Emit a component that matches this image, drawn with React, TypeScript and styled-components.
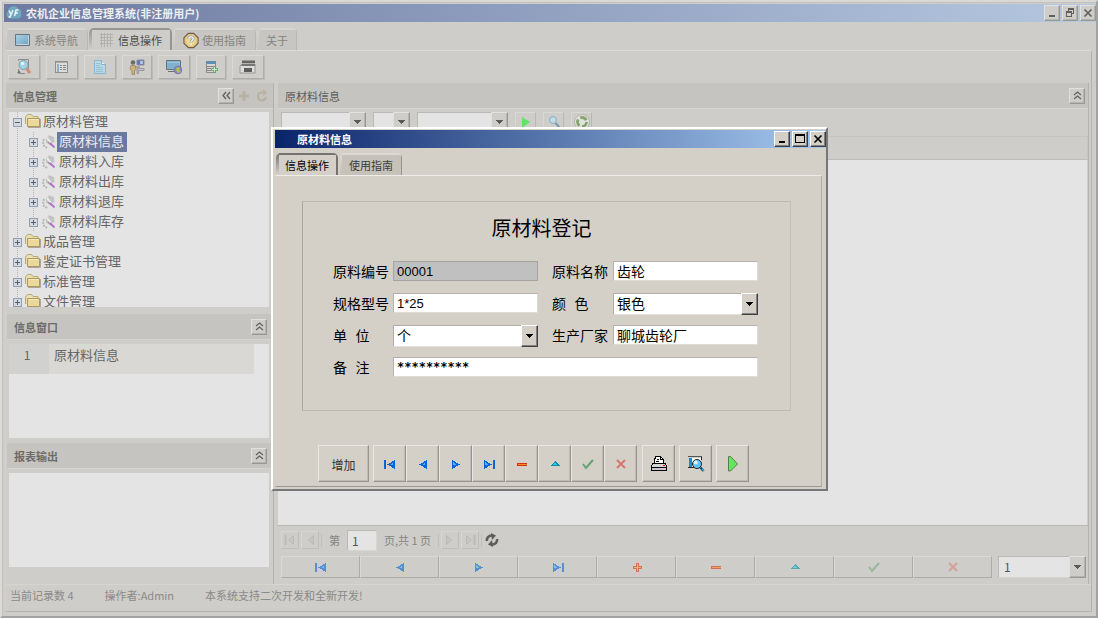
import React from 'react';
import styled, { createGlobalStyle, css } from 'styled-components';

const UI_FONT = '"Noto Sans CJK SC", "Noto Sans", sans-serif';

const GlobalStyle = createGlobalStyle`
  *, *::before, *::after { box-sizing: border-box; }
  body { margin: 0; background: #cecdc9; font-family: ${UI_FONT}; font-size: 11px; line-height: 16px; color: #666; }
  button, input, select { font: inherit; color: inherit; margin: 0; border-radius: 0; }
  button { cursor: pointer; }
  h1, h2, h3, ul, p { margin: 0; padding: 0; font-size: inherit; font-weight: normal; }
  ul { list-style: none; }
  svg { display: block; flex: none; }
`;

/* ---------- window frame ---------- */

const AppWindow = styled.div`
  display: flex;
  flex-direction: column;
  height: 100vh;
  min-height: 600px;
  padding: 2px 0 4px 2px;
  border: 2px solid;
  border-color: #d9d8d5 #a2a2a2 #a2a2a2 #dcdbd8;
  box-shadow: inset 1px 1px 0 #c2c1bd;
  background: #cecdc9;
`;

const TitleBar = styled.header`
  display: flex;
  align-items: center;
  gap: 4px;
  height: 18px;
  padding-left: 2px;
  background: linear-gradient(90deg, #6e7aa1, #b5c8e0);
  color: #eceef2;
`;

const WindowTitle = styled.h1`
  flex: 1;
  font-weight: bold;
  line-height: 18px;
  white-space: nowrap;
`;

const WindowControls = styled.div`
  display: flex;
  gap: 2px;
`;

const bevel = css<{ $strong?: boolean }>`
  border: 1px solid;
  border-color: ${p => (p.$strong ? '#fff #404040 #404040 #fff' : '#e2e1de #9a9895 #9a9895 #e2e1de')};
  box-shadow: ${p => (p.$strong ? 'inset -1px -1px 0 #808080' : 'inset -1px -1px 0 #b4b3af')};
`;

const SmallButton = styled.button<{ $strong?: boolean }>`
  display: grid;
  place-items: center;
  width: 16px;
  height: 16px;
  padding: 0;
  background: ${p => (p.$strong ? '#d4d0c8' : '#cecdc9')};
  color: ${p => (p.$strong ? '#000' : '#606060')};
  ${bevel}
`;

/* ---------- tabs ---------- */

const TabList = styled.div<{ $top: number; $gap: number }>`
  display: flex;
  gap: ${p => p.$gap}px;
  padding: ${p => p.$top}px 0 0 1px;
`;

const Tab = styled.button<{ $active?: boolean; $edge: string; $face: string; $light: string; $icon?: boolean }>`
  display: flex;
  align-items: center;
  justify-content: center;
  gap: 3px;
  height: 22px;
  padding: 2px ${p => (p.$icon ? 10 : 9)}px 0;
  border: 0;
  border-radius: 5px 5px 0 0;
  white-space: nowrap;
  background: ${p =>
    p.$active
      ? `linear-gradient(${p.$edge}, ${p.$edge}) top / 100% 2px no-repeat,
         linear-gradient(${p.$edge}, ${p.$face}) left / 3px 100% no-repeat,
         linear-gradient(${p.$edge}, ${p.$edge}) right / 2px 100% no-repeat, ${p.$face}`
      : `linear-gradient(${p.$light}, ${p.$light}) top / 100% 2px no-repeat,
         linear-gradient(${p.$light}, ${p.$face}) left / 2px 100% no-repeat,
         linear-gradient(${p.$edge}, ${p.$edge}) right / 1px 100% no-repeat, ${p.$face}`};
`;

const MainTab = styled(Tab).attrs(p => ({
  $edge: p.$active ? '#959593' : '#b9b7b3',
  $face: p.$active ? '#cecdc9' : '#c8c6c2',
  $light: '#d6d5d2',
}))`
  color: ${p => (p.$active ? '#4c4c4c' : '#858583')};
`;

const DialogTab = styled(Tab).attrs(p => ({
  $edge: p.$active ? '#74736f' : '#96948e',
  $face: p.$active ? '#d4d0c8' : '#c6c2b9',
  $light: '#dddad4',
}))`
  color: ${p => (p.$active ? '#000' : '#3d3c3a')};
`;

const TabPage = styled.main`
  display: flex;
  flex: 1;
  flex-direction: column;
  min-height: 0;
  margin: 0 4px 0 1px;
  border: 1px solid;
  border-color: #dddcd9 #b3b2ae #b3b2ae #d2d1cd;
`;

/* ---------- main toolbar ---------- */

const Toolbar = styled.div`
  display: flex;
  gap: 6px;
  padding: 4px 0 4px 2px;
`;

const ToolButton = styled.button`
  display: grid;
  place-items: center;
  width: 32px;
  height: 24px;
  padding: 0;
  background: #cecdc9;
  border: 1px solid;
  border-color: #dbdad7 #b0aeab #b0aeab #dbdad7;
  box-shadow: 1px 1px 0 #bcbbb7;
  &:nth-child(4), &:nth-child(6) { width: 30px; }
`;

/* ---------- columns and panels ---------- */

const Columns = styled.div`
  display: grid;
  grid-template-columns: 268px minmax(0, 1fr);
  gap: 4px;
  flex: 1;
  min-height: 0;
  padding-right: 2px;
`;

const SideColumn = styled.aside`
  display: flex;
  flex-direction: column;
  min-height: 0;
  padding-bottom: 12px;
  border-right: 1px solid #b3b2ae;
`;

const ContentColumn = styled.section`
  display: flex;
  flex-direction: column;
  min-height: 0;
  padding-bottom: 6px;
  border-right: 1px solid #b3b2ae;
`;

const PanelHeader = styled.header<{ $inset?: boolean }>`
  display: flex;
  align-items: center;
  gap: 2px;
  height: 26px;
  flex: none;
  margin: ${p => (p.$inset ? '0 2px 0 1px' : '0')};
  padding: 0 ${p => (p.$inset ? 4 : 3)}px 0 7px;
  background: #c6c4c0;
  border-bottom: 1px solid #d5d4d1;
`;

const PanelTitle = styled.h2<{ $bold?: boolean }>`
  flex: 1;
  font-weight: ${p => (p.$bold ? 'bold' : 'normal')};
  color: ${p => (p.$bold ? '#6c6c6a' : '#5c5c5a')};
`;

const GhostButton = styled.button`
  display: grid;
  place-items: center;
  width: 16px;
  height: 16px;
  padding: 0;
  border: 0;
  background: none;
  color: #b9b1a3;
`;

const TreeBox = styled.nav`
  flex: 1 1 0;
  min-height: 0;
  margin: 3px 4px 7px 3px;
  overflow: hidden;
  background: #e4e4e4;
`;

const PanelBody = styled.div`
  flex: none;
  height: 94px;
  margin: 4px 4px 5px 3px;
  background: #e4e4e4;
`;

/* ---------- tree ---------- */

const TreeRow = styled.button`
  display: flex;
  align-items: center;
  width: 100%;
  height: 20px;
  padding: 0;
  border: 0;
  background: none;
  font-size: 13px;
  text-align: left;
`;

const Guide = styled.span`
  display: grid;
  place-items: center;
  width: 16px;
  height: 20px;
  background: repeating-linear-gradient(#b4b4b4 0 1px, transparent 1px 2px) 8px 0 / 1px 100% no-repeat;
`;

const TreeLabel = styled.span<{ $selected?: boolean }>`
  height: 20px;
  padding: 0 3px 0 2px;
  line-height: 18px;
  white-space: nowrap;
  background: ${p => (p.$selected ? '#6b799f' : 'transparent')};
  color: ${p => (p.$selected ? '#eceef4' : 'inherit')};
`;

/* ---------- record table ---------- */

const RecordTable = styled.table`
  width: calc(100% - 15px);
  border-collapse: collapse;
  background: #d9d8d4;
  font-size: 13px;
`;

const RecordNumber = styled.th`
  width: 40px;
  height: 30px;
  padding: 0 4px 8px 0;
  background: #d1d1cf;
  font-size: 12px;
  font-weight: normal;
`;

const RecordName = styled.td`
  padding: 0 5px 8px;
`;

/* ---------- drop-down ---------- */

const SelectBox = styled.span<{ $width?: number }>`
  display: grid;
  width: ${p => (p.$width ? `${p.$width}px` : 'auto')};
  & > * { grid-area: 1 / 1; }
`;

const SelectField = styled.select<{ $strong?: boolean; $height: number }>`
  width: 100%;
  height: ${p => p.$height}px;
  padding: 0 18px ${p => (p.$strong ? 2 : 0)}px ${p => (p.$strong ? 3 : 5)}px;
  appearance: none;
  border: 1px solid;
  border-color: ${p => (p.$strong ? '#b0ada6 #e4e1db #e4e1db #b0ada6' : '#bab9b5 #d6d5d2 #d6d5d2 #bab9b5')};
  background: ${p => (p.$strong ? '#fff' : '#e4e4e4')};
  color: ${p => (p.$strong ? '#000' : '#555')};
  font-size: ${p => (p.$strong ? 14 : 12)}px;
`;

const SelectArrow = styled.span<{ $strong?: boolean }>`
  display: grid;
  place-items: center;
  justify-self: end;
  width: 17px;
  pointer-events: none;
  background: ${p => (p.$strong ? '#d4d0c8' : '#cecdc9')};
  color: ${p => (p.$strong ? '#000' : '#5a5a5a')};
  ${bevel}
`;

/* ---------- right content ---------- */

const FilterBar = styled.div`
  display: flex;
  gap: 7px;
  height: 27px;
  flex: none;
  padding: 3px 3px 4px;
`;

const FilterButton = styled.button`
  display: grid;
  place-items: center;
  width: 21px;
  height: 20px;
  padding: 0;
  background: #cecdc9;
  border: 1px solid;
  border-color: #d9d8d5 #b8b7b3 #b8b7b3 #d9d8d5;
`;

const GridHead = styled.div`
  height: 24px;
  flex: none;
  border: 1px solid #c6c5c1;
  border-bottom: 1px solid #bdbcb8;
`;

const GridBody = styled.div`
  flex: 1;
  min-height: 0;
  margin-right: 1px;
  background: #e4e4e4;
`;

const Pager = styled.div`
  display: flex;
  align-items: center;
  gap: 2px;
  height: 31px;
  flex: none;
  padding: 0 3px 2px;
  border-top: 1px solid #b9b8b4;
  color: #858583;
`;

const PagerButton = styled.button`
  display: grid;
  place-items: center;
  width: 18px;
  height: 18px;
  padding: 0;
  background: #cecdc9;
  border: 1px solid;
  border-color: #d8d7d4 #bfbeba #bfbeba #d8d7d4;
  color: #bbbab7;
`;

const PagerRule = styled.span`
  width: 1px;
  height: 13px;
  background: #bfbeba;
`;

const PagerText = styled.span`
  padding: 0 5px;
  white-space: nowrap;
`;

const PagerInput = styled.input`
  width: 30px;
  height: 21px;
  padding: 0 4px;
  border: 1px solid;
  border-color: #bab9b5 #d6d5d2 #d6d5d2 #bab9b5;
  background: #e4e4e4;
  color: #555;
  font-size: 12px;
`;

const RecordBar = styled.div`
  display: flex;
  flex: none;
  padding: 0 2px 0 3px;
`;

const RecordButton = styled.button`
  display: grid;
  place-items: center;
  flex: 1;
  height: 22px;
  padding: 0;
  background: #cecdc9;
  border: 1px solid;
  border-color: #dad9d6 #adaca8 #adaca8 #dad9d6;
`;

const RecordButtons = styled.div`
  display: flex;
  flex: 1;
  margin-right: 6px;
  svg { opacity: 0.6; }
  button:nth-child(n + 8) svg { opacity: 0.5; }
`;

const StatusBar = styled.footer`
  display: flex;
  gap: 31px;
  height: 27px;
  flex: none;
  padding: 2px 4px 0;
  border-top: 1px solid #d6d5d2;
  color: #8a8a88;
  white-space: nowrap;
`;

/* ---------- dialog ---------- */

const DialogLayer = styled.div`
  position: fixed;
  inset: 0;
  display: grid;
  place-items: center;
  padding-left: 1px;
`;

const DialogWindow = styled.section`
  width: 557px;
  padding: 1px 0 2px 2px;
  border: 2px solid;
  border-color: #fff #77777a #77777a #fff;
  background: #d4d0c8;
  color: #000;
`;

const DialogTitleBar = styled.header`
  display: flex;
  align-items: center;
  height: 18px;
  padding-left: 22px;
  background: linear-gradient(90deg, #0a246a, #a6caf0);
  color: #fff;
`;

const DialogPage = styled.div`
  margin-right: 4px;
  padding: 25px 30px 4px 26px;
  border: 1px solid;
  border-color: #efede9 #b1aea7 #9b9993 transparent;
`;

const FormFrame = styled.form`
  display: block;
  height: 210px;
  padding: 14px 32px 0 30px;
  border: 1px solid;
  border-color: #bcb9b2 #c2bfb8 #bcb9b2 #a9a7a1;
  font-size: 14px;
`;

const FormTitle = styled.h3`
  padding-right: 8px;
  font-size: 20px;
  line-height: 24px;
  text-align: center;
`;

const FormGrid = styled.div`
  display: grid;
  grid-template-columns: 60px 1fr 75px 1fr;
  grid-auto-rows: 32px;
  align-items: start;
  margin-top: 21px;
`;

const FieldLabel = styled.label<{ $second?: boolean }>`
  padding: 2px 0 0 ${p => (p.$second ? 14 : 0)}px;
  font-family: "Liberation Mono", "Noto Sans CJK SC", monospace;
  line-height: 20px;
`;

const TextField = styled.input<{ $code?: boolean; $wide?: boolean }>`
  width: 100%;
  height: 20px;
  padding: 0 3px;
  grid-column: ${p => (p.$wide ? 'span 3' : 'auto')};
  border: 1px solid;
  border-color: #b6b3ac #dedbd5 #dedbd5 #b6b3ac;
  background: #fff;
  font-family: ${p => (p.$code ? '"Liberation Sans", sans-serif' : UI_FONT)};
  font-size: ${p => (p.$code ? 13 : 14)}px;
  &:read-only { background: #c0c0c0; border-color: #a5a4a2; }
`;

const StarField = styled(TextField)`
  font-family: "DejaVu Sans Mono", monospace;
  font-size: 12px;
  font-weight: bold;
`;

const ActionBar = styled.div`
  display: flex;
  margin: 34px 0 0 16px;
`;

const ActionGroup = styled.div`
  display: flex;
  margin: 0 5px 0 4px;
`;

const ActionButton = styled.button<{ $gap?: boolean }>`
  display: grid;
  place-items: center;
  width: 33px;
  height: 37px;
  padding: 0;
  margin-right: ${p => (p.$gap ? 4 : 0)}px;
  background: #d4d0c8;
  border: 1px solid;
  border-color: #e9e7e3 #96948e #96948e #e9e7e3;
  box-shadow: inset -1px -1px 0 #bfbcb5;
`;

const AddButton = styled(ActionButton)`
  width: 51px;
  color: #333;
  font-size: 12px;
  padding-top: 2px;
`;

/* ---------- drawings ---------- */

type IconName = 'first' | 'prev' | 'next' | 'last' | 'plus' | 'minus' | 'up' | 'check' | 'cross';

function RecordIcon({ name }: { name: IconName }) {
  const blue = '#0a66d6';
  const light = '#4fb2f8';
  return (
    <svg width="14" height="12" viewBox="0 0 14 12" shapeRendering="crispEdges" aria-hidden="true">
      {name === 'first' && (
        <>
          <path d="M1 2h2v9H1z" fill={blue} />
          <path d="M12 2v9L4 6.500z" fill={blue} />
          <path d="M10 4v3H7z" fill={light} />
        </>
      )}
      {name === 'prev' && (
        <>
          <path d="M11 2v9L3 6.500z" fill={blue} />
          <path d="M9 4v3H6z" fill={light} />
        </>
      )}
      {name === 'next' && (
        <>
          <path d="M3 2v9l8-4.500z" fill={blue} />
          <path d="M4 4v3h4z" fill={light} />
        </>
      )}
      {name === 'last' && (
        <>
          <path d="M2 2v9l8-4.500z" fill={blue} />
          <path d="M3 4v3h4z" fill={light} />
          <path d="M11 2h2v9h-2z" fill={blue} />
        </>
      )}
      {name === 'plus' && (
        <>
          <path d="M6 2h3v3h3v3H9v3H6V8H3V5h3z" fill="#d63a0c" />
          <path d="M7 3h1v7H7zM4 6h7v1H4z" fill="#ff9d3c" />
        </>
      )}
      {name === 'minus' && (
        <>
          <path d="M2 5h10v3H2z" fill="#d6300c" />
          <path d="M3 6h9v1H3z" fill="#ff8a1c" />
        </>
      )}
      {name === 'up' && (
        <>
          <path d="M7 3l5 5H2z" fill="#0c8fa4" />
          <path d="M7 4l2 3H4z" fill="#1fd0e2" />
        </>
      )}
      {name === 'check' && (
        <path d="M2 6l3 4 7-8" fill="none" stroke="#63a376" strokeWidth="2" shapeRendering="auto" />
      )}
      {name === 'cross' && (
        <path d="M3 2l8 8M11 2l-8 8" fill="none" stroke="#d9776c" strokeWidth="2" shapeRendering="auto" />
      )}
    </svg>
  );
}

const ChevronUp = () => (
  <svg width="9" height="9" viewBox="0 0 9 9" aria-hidden="true">
    <path d="M1 4l3.500-3L8 4M1 8l3.500-3L8 8" fill="none" stroke="currentColor" strokeWidth="1.200" />
  </svg>
);

const ChevronLeft = () => (
  <svg width="9" height="9" viewBox="0 0 9 9" aria-hidden="true">
    <path d="M4 1L1 4.500 4 8M8 1L5 4.500 8 8" fill="none" stroke="currentColor" strokeWidth="1.300" />
  </svg>
);

const DownArrow = () => (
  <svg width="7" height="4" viewBox="0 0 7 4" shapeRendering="crispEdges" aria-hidden="true">
    <path d="M0 0h7v1H0zM1 1h5v1H1zM2 2h3v1H2zM3 3h1v1H3z" fill="currentColor" />
  </svg>
);

const MinimizeIcon = () => (
  <svg width="10" height="10" viewBox="0 0 10 10" aria-hidden="true">
    <path d="M2 7h6v2H2z" fill="currentColor" />
  </svg>
);

const RestoreIcon = () => (
  <svg width="10" height="10" viewBox="0 0 10 10" shapeRendering="crispEdges" aria-hidden="true">
    <path d="M3 0h6v6H7V5h1V2H4v1H3zM1 3h6v6H1zM2 5v3h4V5z" fill="currentColor" fillRule="evenodd" />
  </svg>
);

const MaximizeIcon = () => (
  <svg width="10" height="10" viewBox="0 0 10 10" shapeRendering="crispEdges" aria-hidden="true">
    <path d="M0 0h10v9H0zM1 2v6h8V2z" fill="currentColor" fillRule="evenodd" />
  </svg>
);

const CloseIcon = () => (
  <svg width="10" height="10" viewBox="0 0 10 10" aria-hidden="true">
    <path d="M1.500 1.500l7 7M8.500 1.500l-7 7" stroke="currentColor" strokeWidth="1.700" />
  </svg>
);

const LogoIcon = () => (
  <svg width="16" height="14" viewBox="0 0 16 14" aria-hidden="true">
    <path d="M4 12.500a4 4 0 0 1-2-7 5.500 5.500 0 0 1 10-3 4 4 0 0 1 3 5 3.500 3.500 0 0 1-3 5z" fill="#6fa9bf" />
    <path d="M3 4.500l2 4M7 4L4 11H2.500M8.500 10l1.500-6h2.500M9 7h3" fill="none" stroke="#edf3f5" strokeWidth="1.500" />
  </svg>
);

const ScreenIcon = () => (
  <svg width="16" height="16" viewBox="0 0 16 16" aria-hidden="true">
    <defs>
      <linearGradient id="screen" x2="1" y2="1">
        <stop stopColor="#aed3e4" />
        <stop offset="1" stopColor="#6b9fc2" />
      </linearGradient>
    </defs>
    <path d="M.5 2.500h14v11H.5z" fill="url(#screen)" stroke="#67747c" />
    <path d="M1.500 12.500h12v-9" fill="none" stroke="#c5d6dd" />
  </svg>
);

const GridIcon = () => (
  <svg width="16" height="16" viewBox="0 0 16 16" shapeRendering="crispEdges" aria-hidden="true">
    <path
      d="M2.500 1v14M5.500 1v14M8.500 1v14M11.500 1v14M1 2.500h13M1 5.500h13M1 8.500h13M1 11.500h13"
      stroke="#b2b1ae"
    />
  </svg>
);

const HelpIcon = () => (
  <svg width="16" height="17" viewBox="0 0 18 18" aria-hidden="true">
    <path d="M6 1h6l5 5v6l-5 5H6l-5-5V6z" fill="#e2c77c" stroke="#6d5a50" strokeWidth="1.200" />
    <circle cx="9" cy="9" r="5.500" fill="#ecd793" />
    <path d="M6.500 7c0-3 5-3 5 0 0 2-2.500 1.500-2.500 4" fill="none" stroke="#7890a4" strokeWidth="3" />
    <path d="M6.500 7c0-3 5-3 5 0 0 2-2.500 1.500-2.500 4M9 12.500v2" fill="none" stroke="#eef1f3" strokeWidth="1.700" />
  </svg>
);

const SearchDocIcon = () => (
  <svg width="16" height="18" viewBox="0 0 16 18" aria-hidden="true">
    <path d="M2.500 3V1.500h10V12M2.500 11v4.500H9" fill="none" stroke="#8a8c8d" />
    <path d="M1 15l2-3 2 3z" fill="#7b7f82" />
    <circle cx="7.500" cy="7" r="4.500" fill="#9ed2e4" stroke="#7d9fae" />
    <circle cx="6.500" cy="5.500" r="1.800" fill="#e0eff3" />
    <path d="M10.500 10.500l3.500 4.500" stroke="#cf8f76" strokeWidth="3" />
  </svg>
);

const DetailsIcon = () => (
  <svg width="14" height="14" viewBox="0 0 14 14" shapeRendering="crispEdges" aria-hidden="true">
    <path d="M.5 1.500h12v11H.5z" fill="#dcdcda" stroke="#8d8e8f" />
    <path d="M1 2h11v1H1z" fill="#a9aaab" />
    <path d="M2 4h2v8H2z" fill="#86b2ca" />
    <path d="M5 5.500h2M8 5.500h3M5 7.500h2M8 7.500h3M5 9.500h2M8 9.500h3" stroke="#858890" />
  </svg>
);

const PageIcon = () => (
  <svg width="14" height="16" viewBox="0 0 14 16" aria-hidden="true">
    <path d="M1.500 1.500h7l4 4v9h-11z" fill="#b9d8e5" stroke="#85b7d0" />
    <path d="M8.500 1.500v4h4" fill="#e4edf1" stroke="#85b0c7" />
    <path d="M3 4.500h4M3 6.500h4M3 8.500h7M3 10.500h7M3 12.500h7" stroke="#99c0d2" />
  </svg>
);

const OperatorIcon = () => (
  <svg width="16" height="16" viewBox="0 0 16 16" aria-hidden="true">
    <path d="M8 1h7v5H8z" fill="#6370b8" stroke="#8b8da0" />
    <path d="M11 2h3v3h-3z" fill="#a9c5df" />
    <path d="M8 9.500h7v2H9.500v3H8z" fill="#bfc1c3" stroke="#85878a" strokeWidth=".7" />
    <circle cx="4" cy="3.500" r="2.300" fill="#6e6b68" />
    <path d="M2 6.500h4l1 4-1.500 1v4H3v-4L1 10z" fill="#d3b277" stroke="#94835f" strokeWidth=".8" />
    <path d="M6 8h5" stroke="#8a7a60" />
  </svg>
);

const ScreenWorldIcon = () => (
  <svg width="18" height="16" viewBox="0 0 18 16" aria-hidden="true">
    <path d="M1.500 1.500h14v9h-14z" fill="#7fb2cd" stroke="#64737c" />
    <path d="M2 3h13v1H2z" fill="#9cc7da" />
    <path d="M3 12.500h9" stroke="#6c7275" />
    <circle cx="13" cy="11" r="3.800" fill="#6c97c0" stroke="#8a6bb0" />
    <path d="M12 8l3 1-1 2 2 2-3 1-2-3z" fill="#c0bb52" />
  </svg>
);

const WindowAddIcon = () => (
  <svg width="14" height="14" viewBox="0 0 14 14" aria-hidden="true">
    <path d="M2.500 1.500h9v11h-9z" fill="#d6d7d5" stroke="#8b8d8e" />
    <path d="M2 1h10v3H2z" fill="#5c8fb2" />
    <path d="M3 6.500h6M3 8.500h4M3 10.500h4" stroke="#818384" />
    <path d="M10.500 6v7M7 9.500h7" stroke="#5aa764" strokeWidth="2.600" />
    <path d="M10.500 7v5M8 9.500h5" stroke="#cfe6cf" />
  </svg>
);

const PrinterFlatIcon = () => (
  <svg width="18" height="16" viewBox="0 0 18 16" aria-hidden="true">
    <path d="M3 1.500h13v2.500H3z" fill="#666" />
    <path d="M1 7l2-2h13v9H1z" fill="#dbdbd9" stroke="#8a8a8a" strokeWidth=".8" />
    <path d="M3 5h13v2H2z" fill="#777" />
    <path d="M5 9h8v4H5z" fill="#5c5c5c" />
  </svg>
);

const AddCrossIcon = () => (
  <svg width="12" height="12" viewBox="0 0 12 12" aria-hidden="true">
    <path d="M4.500 1h3v3.500H11v3H7.500V11h-3V7.500H1v-3h3.500z" fill="currentColor" />
  </svg>
);

const ReloadIcon = () => (
  <svg width="12" height="13" viewBox="0 0 12 13" aria-hidden="true">
    <path d="M8 3.500H5a4 4 0 1 0 5 4.500" fill="none" stroke="currentColor" strokeWidth="2.200" />
    <path d="M7 0l4 3.500L7 7z" fill="currentColor" />
  </svg>
);

const ExpanderIcon = ({ open }: { open?: boolean }) => (
  <svg width="9" height="9" viewBox="0 0 9 9" shapeRendering="crispEdges" aria-hidden="true">
    <path d="M.5.5h8v8h-8z" fill="#d5dae1" stroke="#929db0" />
    <path d={open ? 'M2 4.500h5' : 'M2 4.500h5M4.500 2v5'} stroke="#56606f" />
  </svg>
);

const FolderIcon = () => (
  <svg width="16" height="16" viewBox="0 0 16 16" aria-hidden="true">
    <path d="M.5 10V3L2.500.5h4L8 2.500h5V11" fill="#e8e0b0" stroke="#b9a878" />
    <path d="M2.500 4.500h12v8h-12z" fill="#ead99a" stroke="#b0965c" />
    <path d="M3.500 5.500h10" stroke="#f3edbc" />
    <path d="M3 13.500h12.500V5" fill="none" stroke="#aaa69b" />
  </svg>
);

const PartIcon = () => (
  <svg width="16" height="16" viewBox="0 0 16 16" aria-hidden="true">
    <path d="M5 4l2-1 1-2 2 1 3 1v3l1 2-3 1-2 1-4-1z" fill="#c4c4c4" />
    <path d="M3 5l-1 3 1 4 3 2" fill="none" stroke="#b6b6b6" strokeWidth="2" strokeDasharray="2 1" />
    <path d="M6 4l4 5" stroke="#ededed" strokeWidth="2" />
    <path d="M7 8l3 3" stroke="#999" strokeWidth="1.500" />
    <path d="M9 9l4.500 4.500" stroke="#b070cc" strokeWidth="1.800" />
  </svg>
);

const PlayIcon = () => (
  <svg width="12" height="12" viewBox="0 0 12 12" aria-hidden="true">
    <path d="M2 1l8 5-8 6z" fill="#62e560" />
  </svg>
);

const LensIcon = () => (
  <svg width="14" height="14" viewBox="0 0 14 14" aria-hidden="true">
    <circle cx="6" cy="5" r="3.500" fill="#c0dce6" stroke="#88afc0" />
    <path d="M8.500 8l4 4.500" stroke="#799bb1" strokeWidth="2" />
  </svg>
);

const RecycleIcon = () => (
  <svg width="18" height="18" viewBox="0 0 18 18" aria-hidden="true">
    <circle cx="9" cy="9" r="7.500" fill="#e0e2dc" stroke="#b4b8ac" />
    <circle cx="9" cy="9" r="4.500" fill="none" stroke="#87a370" strokeWidth="2.800" strokeDasharray="7 2.400" />
  </svg>
);

const PageArrow = ({ flip, bar }: { flip?: boolean; bar?: boolean }) => (
  <svg width="12" height="12" viewBox="0 0 12 12" aria-hidden="true">
    <g transform={flip ? 'rotate(180 6 6)' : undefined}>
      <path d="M9.500 1.500v9L4.500 6z" fill="#c6c5c2" stroke="currentColor" />
      {bar && <path d="M1.500 1v10" stroke="currentColor" strokeWidth="2" />}
    </g>
  </svg>
);

const SyncIcon = () => (
  <svg width="14" height="14" viewBox="0 0 14 14" aria-hidden="true">
    <path d="M2 8a5 4.500 0 0 1 5-5.500M12 6a5 4.500 0 0 1-5 5.500" fill="none" stroke="#5c5c5c" strokeWidth="2.600" />
    <path d="M6 0l5 2.500L7 7zM8 14l-5-2.500L7 7z" fill="#5c5c5c" />
  </svg>
);

const PrintIcon = () => (
  <svg width="18" height="18" viewBox="0 0 18 18" shapeRendering="crispEdges" aria-hidden="true">
    <path d="M4.500 9V3.500h1v-2h5l3 3V9" fill="#fff" stroke="#000" />
    <path d="M10.500 1.500v3h3M6 6.500h3M6 8.500h6M7 4.500h2" fill="none" stroke="#000" />
    <path d="M3 8.500h12l1.500 2v5h-15v-5z" fill="#d6d4d0" stroke="#000" />
    <path d="M2 12.500h14" stroke="#000" />
    <path d="M2 13h14v2H2z" fill="#c9c4d6" />
    <path d="M13 10h2v1h-2z" fill="#f00" />
  </svg>
);

const PreviewIcon = () => (
  <svg width="18" height="18" viewBox="0 0 18 18" aria-hidden="true">
    <path d="M1 1.500h14" stroke="#555" />
    <path d="M3 3h11v9H3z" fill="#f4f8fa" />
    <path d="M2 3h3v9H2z" fill="#1b8bd0" />
    <path d="M1 12.500h6M14.500 2v3" stroke="#222" />
    <circle cx="10" cy="9" r="4.500" fill="#5ec3f5" stroke="#222" />
    <circle cx="8.700" cy="7.500" r="2" fill="#dcf4ff" />
    <path d="M13.500 12.500l3 3.500" stroke="#104b70" strokeWidth="2.400" />
    <path d="M15 14l2 2" stroke="#34a9e6" strokeWidth="1.400" />
  </svg>
);

const RunIcon = () => (
  <svg width="14" height="18" viewBox="0 0 14 18" aria-hidden="true">
    <path d="M2.500 1.500h2l7 7.500-7 7h-2z" fill="#63e75c" stroke="#5a7a50" />
  </svg>
);

/* ---------- reusable parts ---------- */

interface DropDownProps {
  label: string;
  options: string[];
  width?: number;
  height: number;
  strong?: boolean;
  id?: string;
}

function DropDown({ label, options, width, height, strong, id }: DropDownProps) {
  return (
    <SelectBox $width={width}>
      <SelectField id={id} aria-label={label} $strong={strong} $height={height}>
        {options.map(option => (
          <option key={option}>{option}</option>
        ))}
      </SelectField>
      <SelectArrow $strong={strong}>
        <DownArrow />
      </SelectArrow>
    </SelectBox>
  );
}

interface TreeNode {
  name: string;
  selected?: boolean;
  children?: TreeNode[];
}

const tree: TreeNode[] = [
  {
    name: '原材料管理',
    children: [
      { name: '原材料信息', selected: true },
      { name: '原材料入库' },
      { name: '原材料出库' },
      { name: '原材料退库' },
      { name: '原材料库存' },
    ],
  },
  { name: '成品管理' },
  { name: '鉴定证书管理' },
  { name: '标准管理' },
  { name: '文件管理' },
];

function TreeItems({ nodes, level }: { nodes: TreeNode[]; level: number }) {
  return (
    <ul>
      {nodes.map(node => (
        <li key={node.name}>
          <TreeRow type="button">
            {level > 0 && <Guide />}
            <Guide>
              <ExpanderIcon open={!!node.children} />
            </Guide>
            {level > 0 ? <PartIcon /> : <FolderIcon />}
            <TreeLabel $selected={node.selected}>{node.name}</TreeLabel>
          </TreeRow>
          {node.children && <TreeItems nodes={node.children} level={level + 1} />}
        </li>
      ))}
    </ul>
  );
}

const tools = [
  { label: '查询', Icon: SearchDocIcon },
  { label: '明细', Icon: DetailsIcon },
  { label: '文档', Icon: PageIcon },
  { label: '操作员', Icon: OperatorIcon },
  { label: '网络', Icon: ScreenWorldIcon },
  { label: '新建窗口', Icon: WindowAddIcon },
  { label: '打印', Icon: PrinterFlatIcon },
];

const recordActions: { name: IconName; label: string }[] = [
  { name: 'first', label: '首记录' },
  { name: 'prev', label: '上一条' },
  { name: 'next', label: '下一条' },
  { name: 'last', label: '末记录' },
  { name: 'plus', label: '插入' },
  { name: 'minus', label: '删除' },
  { name: 'up', label: '编辑' },
  { name: 'check', label: '提交' },
  { name: 'cross', label: '取消' },
];

function MaterialDialog() {
  return (
    <DialogLayer>
      <DialogWindow role="dialog" aria-labelledby="dialog-title">
        <DialogTitleBar>
          <WindowTitle as="h2" id="dialog-title">原材料信息</WindowTitle>
          <WindowControls>
            <SmallButton $strong aria-label="最小化"><MinimizeIcon /></SmallButton>
            <SmallButton $strong aria-label="最大化"><MaximizeIcon /></SmallButton>
            <SmallButton $strong aria-label="关闭"><CloseIcon /></SmallButton>
          </WindowControls>
        </DialogTitleBar>
        <TabList role="tablist" $top={5} $gap={2}>
          <DialogTab role="tab" aria-selected $active>信息操作</DialogTab>
          <DialogTab role="tab" aria-selected={false}>使用指南</DialogTab>
        </TabList>
        <DialogPage>
          <FormFrame>
            <FormTitle>原材料登记</FormTitle>
            <FormGrid>
              <FieldLabel htmlFor="code">原料编号</FieldLabel>
              <TextField id="code" $code readOnly defaultValue="00001" />
              <FieldLabel htmlFor="name" $second>原料名称</FieldLabel>
              <TextField id="name" defaultValue="齿轮" />
              <FieldLabel htmlFor="model">规格型号</FieldLabel>
              <TextField id="model" $code defaultValue="1*25" />
              <FieldLabel htmlFor="color" $second>颜 色</FieldLabel>
              <DropDown id="color" label="颜 色" options={['银色']} height={22} strong />
              <FieldLabel htmlFor="unit">单 位</FieldLabel>
              <DropDown id="unit" label="单 位" options={['个']} height={22} strong />
              <FieldLabel htmlFor="maker" $second>生产厂家</FieldLabel>
              <TextField id="maker" defaultValue="聊城齿轮厂" />
              <FieldLabel htmlFor="note">备 注</FieldLabel>
              <StarField id="note" $wide defaultValue="**********" />
            </FormGrid>
          </FormFrame>
          <ActionBar>
            <AddButton type="button">增加</AddButton>
            <ActionGroup>
              {recordActions
                .filter(action => action.name !== 'plus')
                .map(action => (
                  <ActionButton key={action.name} type="button" aria-label={action.label}>
                    <RecordIcon name={action.name} />
                  </ActionButton>
                ))}
            </ActionGroup>
            <ActionButton type="button" $gap aria-label="打印"><PrintIcon /></ActionButton>
            <ActionButton type="button" $gap aria-label="预览"><PreviewIcon /></ActionButton>
            <ActionButton type="button" aria-label="运行"><RunIcon /></ActionButton>
          </ActionBar>
        </DialogPage>
      </DialogWindow>
    </DialogLayer>
  );
}

export default function App() {
  return (
    <>
      <GlobalStyle />
      <AppWindow>
        <TitleBar>
          <LogoIcon />
          <WindowTitle>农机企业信息管理系统(非注册用户)</WindowTitle>
          <WindowControls>
            <SmallButton aria-label="最小化"><MinimizeIcon /></SmallButton>
            <SmallButton aria-label="还原"><RestoreIcon /></SmallButton>
            <SmallButton aria-label="关闭"><CloseIcon /></SmallButton>
          </WindowControls>
        </TitleBar>
        <TabList role="tablist" $top={6} $gap={1}>
          <MainTab role="tab" aria-selected={false} $icon><ScreenIcon />系统导航</MainTab>
          <MainTab role="tab" aria-selected $active $icon><GridIcon />信息操作</MainTab>
          <MainTab role="tab" aria-selected={false} $icon><HelpIcon />使用指南</MainTab>
          <MainTab role="tab" aria-selected={false}>关于</MainTab>
        </TabList>
        <TabPage>
          <Toolbar role="toolbar">
            {tools.map(({ label, Icon }) => (
              <ToolButton key={label} type="button" aria-label={label}><Icon /></ToolButton>
            ))}
          </Toolbar>
          <Columns>
            <SideColumn>
              <PanelHeader>
                <PanelTitle $bold>信息管理</PanelTitle>
                <SmallButton aria-label="折叠"><ChevronLeft /></SmallButton>
                <GhostButton aria-label="添加"><AddCrossIcon /></GhostButton>
                <GhostButton aria-label="刷新"><ReloadIcon /></GhostButton>
              </PanelHeader>
              <TreeBox aria-label="信息管理">
                <TreeItems nodes={tree} level={0} />
              </TreeBox>
              <PanelHeader $inset>
                <PanelTitle $bold>信息窗口</PanelTitle>
                <SmallButton aria-label="折叠"><ChevronUp /></SmallButton>
              </PanelHeader>
              <PanelBody>
                <RecordTable>
                  <tbody>
                    <tr>
                      <RecordNumber scope="row">1</RecordNumber>
                      <RecordName>原材料信息</RecordName>
                    </tr>
                  </tbody>
                </RecordTable>
              </PanelBody>
              <PanelHeader $inset>
                <PanelTitle $bold>报表输出</PanelTitle>
                <SmallButton aria-label="折叠"><ChevronUp /></SmallButton>
              </PanelHeader>
              <PanelBody />
            </SideColumn>
            <ContentColumn>
              <PanelHeader>
                <PanelTitle>原材料信息</PanelTitle>
                <SmallButton aria-label="折叠"><ChevronUp /></SmallButton>
              </PanelHeader>
              <FilterBar>
                <DropDown label="字段" options={['']} width={85} height={20} />
                <DropDown label="条件" options={['']} width={37} height={20} />
                <DropDown label="内容" options={['']} width={91} height={20} />
                <FilterButton aria-label="执行"><PlayIcon /></FilterButton>
                <FilterButton aria-label="查找"><LensIcon /></FilterButton>
                <FilterButton aria-label="重置"><RecycleIcon /></FilterButton>
              </FilterBar>
              <GridHead />
              <GridBody />
              <Pager>
                <PagerButton aria-label="首页"><PageArrow bar /></PagerButton>
                <PagerButton aria-label="上一页"><PageArrow /></PagerButton>
                <PagerRule />
                <PagerText>第</PagerText>
                <PagerInput aria-label="页码" defaultValue="1" />
                <PagerText>页,共 1 页</PagerText>
                <PagerRule />
                <PagerButton aria-label="下一页"><PageArrow flip /></PagerButton>
                <PagerButton aria-label="末页"><PageArrow flip bar /></PagerButton>
                <PagerRule />
                <GhostButton aria-label="刷新"><SyncIcon /></GhostButton>
              </Pager>
              <RecordBar>
                <RecordButtons>
                  {recordActions.map(action => (
                    <RecordButton key={action.name} type="button" aria-label={action.label}>
                      <RecordIcon name={action.name} />
                    </RecordButton>
                  ))}
                </RecordButtons>
                <DropDown label="记录" options={['1']} width={88} height={22} />
              </RecordBar>
            </ContentColumn>
          </Columns>
          <StatusBar>
            <span>当前记录数 4</span>
            <span>操作者:Admin</span>
            <span>本系统支持二次开发和全新开发!</span>
          </StatusBar>
        </TabPage>
      </AppWindow>
      <MaterialDialog />
    </>
  );
}
